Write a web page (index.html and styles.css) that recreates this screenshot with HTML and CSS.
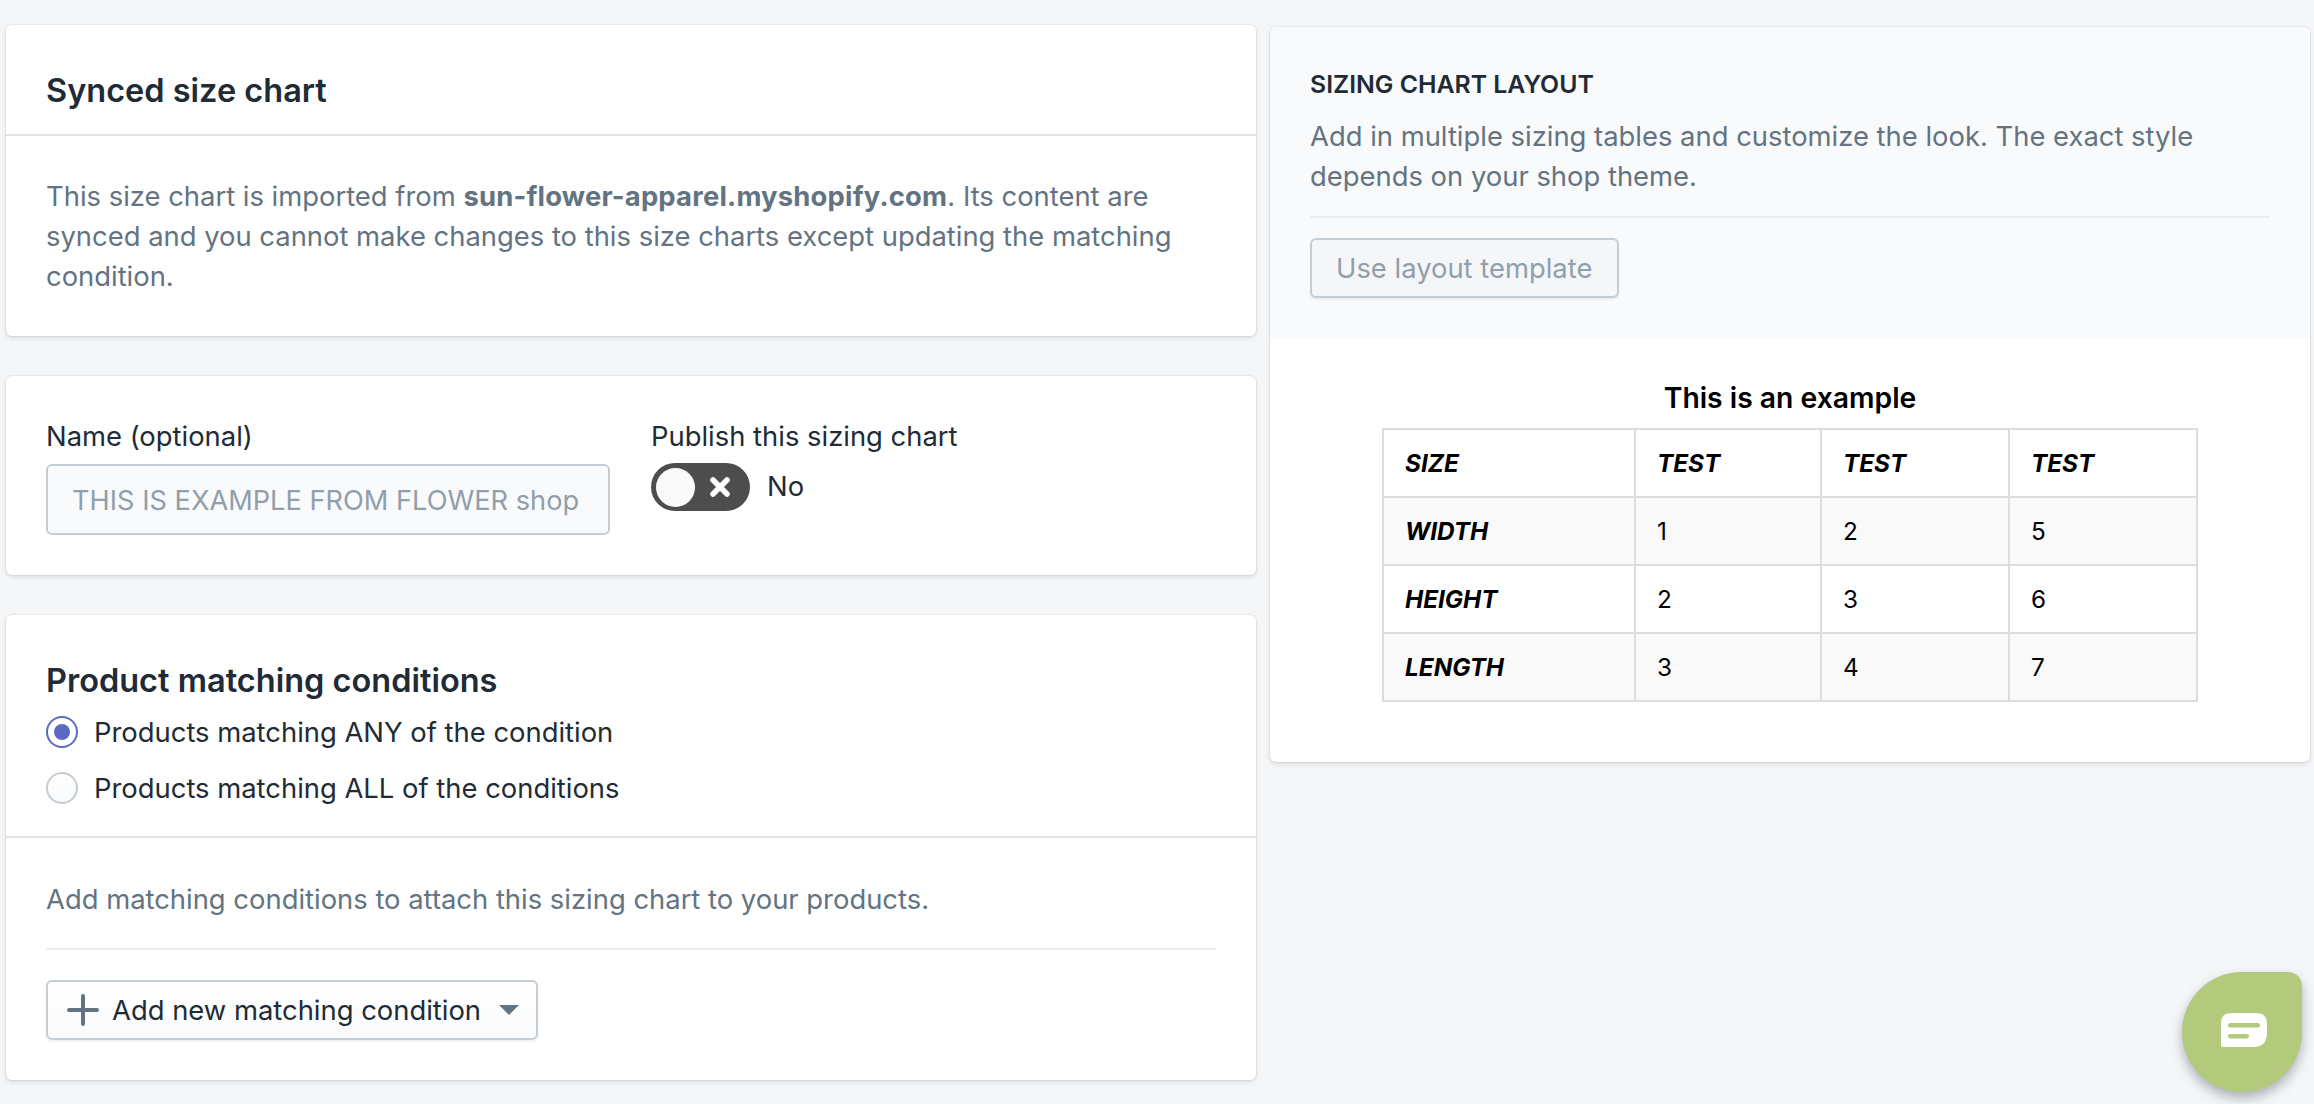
FILE: index.html
```html
<!DOCTYPE html>
<html lang="en">
<head>
<meta charset="utf-8">
<title>Synced size chart</title>
<link rel="stylesheet" href="styles.css">
</head>
<body>
<main class="page">
  <div class="col-left">
    <section class="card">
      <header class="card-head"><h2 class="title">Synced size chart</h2></header>
      <div class="card-body subdued">This size chart is imported from <strong>sun-flower-apparel.myshopify.com</strong>. Its content are synced and you cannot make changes to this size charts except updating the matching condition.</div>
    </section>
    <section class="card card-body form-row">
      <div class="field-name">
        <label class="label">Name (optional)</label>
        <input class="input" type="text" disabled value="THIS IS EXAMPLE FROM FLOWER shop">
      </div>
      <div class="field-publish">
        <div class="label">Publish this sizing chart</div>
        <div class="toggle-row">
          <span class="toggle">
            <span class="knob"></span>
            <svg class="toggle-x" viewBox="0 0 20 20" width="20" height="20"><path d="M3 3L17 17M17 3L3 17" stroke="#fff" stroke-width="5.5" stroke-linecap="round"/></svg>
          </span>
          <span class="toggle-text">No</span>
        </div>
      </div>
    </section>
    <section class="card">
      <div class="cond-head">
        <h2 class="title cond-title">Product matching conditions</h2>
        <div class="radio-row"><span class="radio on"></span><span>Products matching ANY of the condition</span></div>
        <div class="radio-row"><span class="radio"></span><span>Products matching ALL of the conditions</span></div>
      </div>
      <div class="cond-body">
        <p class="subdued cond-text">Add matching conditions to attach this sizing chart to your products.</p>
        <hr class="rule">
        <button class="btn btn-add" type="button">
          <svg viewBox="0 0 32 32" width="32" height="32"><path d="M16 2V30M2 16H30" stroke="#637381" stroke-width="4" stroke-linecap="round"/></svg>
          <span>Add new matching condition</span>
          <svg class="caret" viewBox="0 0 20 10" width="20" height="10"><path d="M0 0H20L10 10Z" fill="#637381"/></svg>
        </button>
      </div>
    </section>
  </div>
  <aside class="col-right">
    <section class="card card-right">
      <div class="layout-head">
        <h3 class="overline">SIZING CHART LAYOUT</h3>
        <p class="subdued layout-text">Add in multiple sizing tables and customize the look. The exact style depends on your shop theme.</p>
        <hr class="rule rule-tight">
        <button class="btn btn-disabled" type="button" disabled>Use layout template</button>
      </div>
      <div class="preview">
        <div class="preview-title">This is an example</div>
        <table class="size-table">
          <colgroup><col class="c1"><col class="c2"><col class="c3"><col class="c4"></colgroup>
          <tr><th>SIZE</th><th>TEST</th><th>TEST</th><th>TEST</th></tr>
          <tr><th>WIDTH</th><td>1</td><td>2</td><td>5</td></tr>
          <tr><th>HEIGHT</th><td>2</td><td>3</td><td>6</td></tr>
          <tr><th>LENGTH</th><td>3</td><td>4</td><td>7</td></tr>
        </table>
      </div>
    </section>
  </aside>
</main>
<button class="chat" type="button" aria-label="Chat">
  <svg viewBox="0 0 46 34" width="46" height="34"><path d="M10 0H35Q46 0 46 11V20Q46 34 32 34H2Q0 34 0 32V10Q0 0 10 0Z" fill="#fff"/><rect x="7" y="10" width="32" height="4.5" rx="2.2" fill="#b3c97b"/><rect x="7" y="21" width="21" height="4.5" rx="2.2" fill="#b3c97b"/></svg>
</button>
</body>
</html>
```
FILE: styles.css
```css
* { box-sizing: border-box; }
html, body { margin: 0; height: 100%; }
body {
  background: #f4f6f8;
  color: #212b36;
  font-family: Inter, "Noto Sans", sans-serif;
  font-size: 27.4px;
  line-height: 40px;
  overflow: hidden;
}
strong { font-weight: 700; letter-spacing: .2px; }
.page { display: flex; gap: 14px; padding: 25px 4px 0 6px; align-items: flex-start; }
.col-left { width: 1250px; display: flex; flex-direction: column; gap: 40px; }
.col-right { width: 1040px; margin-top: 2px; }
.card {
  background: #fff;
  border-radius: 6px;
  box-shadow: 0 0 0 1px rgba(63,63,68,.05), 0 2px 4px rgba(63,63,68,.15);
}
.card-head { padding: 44px 40px 21px; border-bottom: 2px solid #dfe3e8; }
.title { margin: 0; font-size: 32.5px; line-height: 44px; font-weight: 600; }
.card-body { padding: 40px; }
.subdued { color: #637381; }
.form-row { display: flex; gap: 41px; }
.field-name { width: 564px; }
.label { display: block; height: 40px; }
.input {
  display: block;
  width: 100%;
  height: 71px;
  margin-top: 8px;
  padding: 2px 24px 0;
  border: 2px solid #c4cdd5;
  border-radius: 6px;
  background: #f9fafb;
  color: #919eab;
  font: inherit;
  font-size: 27.2px;
  opacity: 1;
}
.toggle-row { display: flex; align-items: center; gap: 17px; margin-top: 7px; }
.toggle {
  width: 99px;
  height: 48px;
  padding: 0 5px;
  border-radius: 24px;
  background: #4d4d4d;
  display: flex;
  align-items: center;
  justify-content: space-between;
}
.knob { width: 39px; height: 39px; border-radius: 50%; background: #fafafa; }
.toggle-x { margin-right: 15px; }
.toggle-text { margin-top: -2px; }
.cond-head { padding: 44px 40px 20px; border-bottom: 2px solid #dfe3e8; }
.cond-title { margin-bottom: 1px; }
.radio-row { display: flex; align-items: center; gap: 16px; height: 56px; }
.radio {
  width: 32px;
  height: 32px;
  border-radius: 50%;
  border: 2px solid #c4cdd5;
  background: linear-gradient(#fff, #f9fafb);
  position: relative;
  flex: none;
}
.radio.on { border-color: #5c6ac4; background: #fff; }
.radio.on::after {
  content: "";
  position: absolute;
  inset: 6px;
  border-radius: 50%;
  background: #5c6ac4;
}
.cond-body { padding: 41px 40px 40px; }
.cond-text { margin: 0; }
.rule { border: 0; height: 2px; background: #ebeef0; margin: 29px 0 30px; }
.btn {
  display: inline-flex;
  align-items: center;
  height: 60px;
  border: 2px solid #c4cdd5;
  border-radius: 6px;
  font: inherit;
  color: inherit;
}
.btn-add {
  padding: 0 17px 0 19px;
  gap: 13px;
  background: linear-gradient(#fff, #f9fafb);
  box-shadow: 0 2px 2px rgba(22,29,37,.06);
}
.caret { margin-left: 5px; }
.card-right { overflow: hidden; }
.layout-head { background: #f9fafb; padding: 41px 40px 40px; height: 311px; }
.overline { margin: 0; font-size: 24.8px; line-height: 32px; font-weight: 600; }
.layout-text { margin: 16px 0 0; }
.rule-tight { margin: 20px 0 20px; }
.btn-disabled {
  padding: 0 25px 0 24px;
  background: #f4f6f8;
  color: #919eab;
  box-shadow: 0 2px 2px rgba(22,29,37,.06);
}
.preview { padding: 40px 0 60px; }
.preview-title { text-align: center; color: #000; font-size: 28.3px; font-weight: 600; margin-bottom: 10px; }
.size-table {
  margin: 0 auto;
  width: 814px;
  table-layout: fixed;
  border-collapse: collapse;
  color: #000;
  font-size: 24.3px;
  line-height: 30px;
}
.c1 { width: 252px; }
.c2 { width: 186px; }
.c3 { width: 188px; }
.c4 { width: 188px; }
.size-table th, .size-table td {
  border: 2px solid #ddd;
  padding: 0 21px;
  height: 68px;
  text-align: left;
}
.size-table th { font-style: italic; font-weight: 700; }
.size-table td { font-weight: 400; }
.size-table tr:nth-child(even) { background: #f9f9f9; }
.chat {
  position: fixed;
  left: 2182px;
  top: 972px;
  width: 120px;
  height: 120px;
  padding: 0;
  border: 0;
  border-radius: 50% 14px 50% 50%;
  background: #b3c97b;
  box-shadow: 0 6px 12px rgba(40,50,60,.35);
  display: flex;
  align-items: center;
  justify-content: center;
}
.chat svg { margin: -4px 0 0 4px; }
```
